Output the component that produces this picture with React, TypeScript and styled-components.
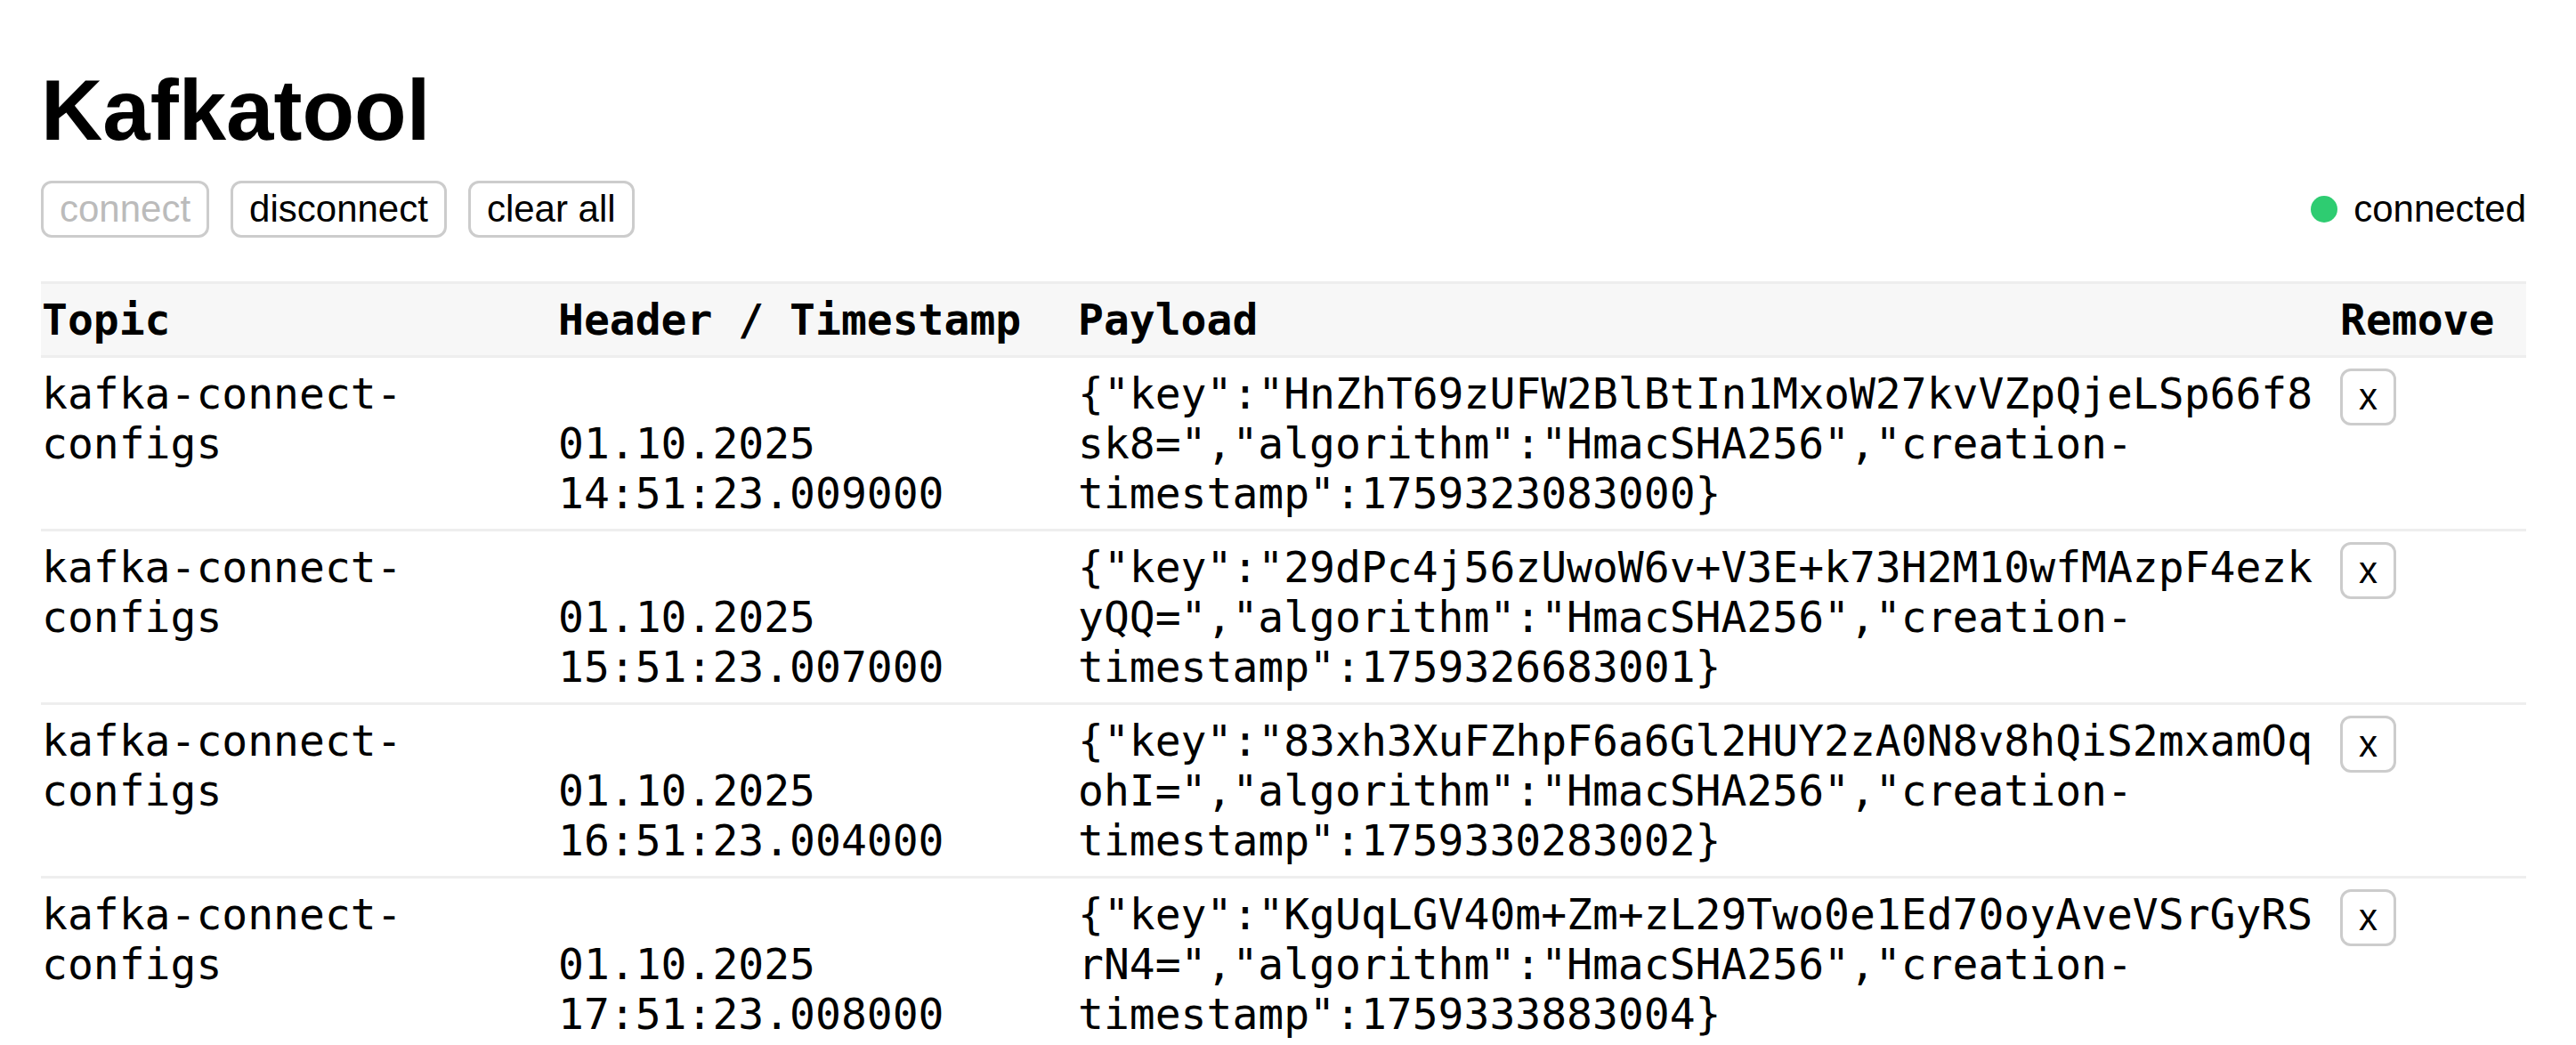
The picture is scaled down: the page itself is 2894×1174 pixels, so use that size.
import React from "react";
import styled, { createGlobalStyle } from "styled-components";

const GlobalStyle = createGlobalStyle`
  html { scrollbar-width: none; }
  body {
    margin: 0;
    background: #ffffff;
    color: #000000;
    font-family: "Liberation Sans", Arial, sans-serif;
  }
`;

const Page = styled.main`
  padding: 69px 56px 0 46px;
`;

const Title = styled.h1`
  margin: 0 0 24px;
  font-family: "Liberation Sans", Arial, sans-serif;
  font-weight: 700;
  font-size: 96px;
  line-height: 110px;
`;

const Toolbar = styled.div`
  display: flex;
  align-items: center;
  justify-content: space-between;
`;

const ButtonGroup = styled.div`
  display: flex;
  gap: 24px;
`;

const Button = styled.button`
  font-family: "Liberation Sans", Arial, sans-serif;
  font-size: 42px;
  line-height: 46px;
  padding: 6px 18px;
  border: 3px solid #cccccc;
  border-radius: 12px;
  background: #ffffff;
  color: #000000;
  cursor: pointer;

  &:disabled {
    color: #bbbbbb;
    cursor: default;
  }
`;

const Status = styled.div`
  display: flex;
  align-items: center;
  gap: 18px;
  font-size: 42px;
  line-height: 46px;
`;

const Dot = styled.span<{ $on: boolean }>`
  width: 30px;
  height: 30px;
  border-radius: 50%;
  background: ${(p) => (p.$on ? "#2ecc71" : "#e74c3c")};
`;

const Table = styled.table`
  margin-top: 49px;
  width: 100%;
  table-layout: fixed;
  border-collapse: separate;
  border-spacing: 0;
  font-family: "DejaVu Sans Mono", Menlo, monospace;
  font-size: 48px;
`;

const Col = styled.col<{ $w: number }>`
  width: ${(p) => p.$w}px;
`;

const Th = styled.th`
  text-align: left;
  font-weight: 700;
  padding: 12px 21px 12px 1px;
  background: #f7f7f7;
  border-top: 3px solid #eeeeee;
  border-bottom: 3px solid #eeeeee;
`;

const Td = styled.td`
  vertical-align: top;
  padding: 12px 21px 12px 1px;
  border-bottom: 3px solid #eeeeee;
  overflow-wrap: anywhere;
`;

const HeaderLine = styled.div`
  min-height: 1lh;
`;

const RemoveButton = styled(Button)``;

type Message = {
  topic: string;
  header: string;
  timestamp: string;
  payload: string;
};

const messages: Message[] = [
  {
    topic: "kafka-connect-configs",
    header: "",
    timestamp: "01.10.2025 14:51:23.009000",
    payload:
      '{"key":"HnZhT69zUFW2BlBtIn1MxoW27kvVZpQjeLSp66f8sk8=","algorithm":"HmacSHA256","creation-timestamp":1759323083000}',
  },
  {
    topic: "kafka-connect-configs",
    header: "",
    timestamp: "01.10.2025 15:51:23.007000",
    payload:
      '{"key":"29dPc4j56zUwoW6v+V3E+k73H2M10wfMAzpF4ezkyQQ=","algorithm":"HmacSHA256","creation-timestamp":1759326683001}',
  },
  {
    topic: "kafka-connect-configs",
    header: "",
    timestamp: "01.10.2025 16:51:23.004000",
    payload:
      '{"key":"83xh3XuFZhpF6a6Gl2HUY2zA0N8v8hQiS2mxamOqohI=","algorithm":"HmacSHA256","creation-timestamp":1759330283002}',
  },
  {
    topic: "kafka-connect-configs",
    header: "",
    timestamp: "01.10.2025 17:51:23.008000",
    payload:
      '{"key":"KgUqLGV40m+Zm+zL29Two0e1Ed70oyAveVSrGyRSrN4=","algorithm":"HmacSHA256","creation-timestamp":1759333883004}',
  },
];

export default function App() {
  return (
    <>
      <GlobalStyle />
      <Page>
        <Title>Kafkatool</Title>
        <Toolbar>
          <ButtonGroup>
            <Button disabled>connect</Button>
            <Button>disconnect</Button>
            <Button>clear all</Button>
          </ButtonGroup>
          <Status>
            <Dot $on />
            <span>connected</span>
          </Status>
        </Toolbar>
        <Table>
          <colgroup>
            <Col $w={580} />
            <Col $w={584} />
            <Col $w={1418} />
            <Col $w={210} />
          </colgroup>
          <thead>
            <tr>
              <Th>Topic</Th>
              <Th>Header / Timestamp</Th>
              <Th>Payload</Th>
              <Th>Remove</Th>
            </tr>
          </thead>
          <tbody>
            {messages.map((m, i) => (
              <tr key={i}>
                <Td>{m.topic}</Td>
                <Td>
                  <HeaderLine>{m.header}</HeaderLine>
                  <div>{m.timestamp}</div>
                </Td>
                <Td>{m.payload}</Td>
                <Td>
                  <RemoveButton>x</RemoveButton>
                </Td>
              </tr>
            ))}
          </tbody>
        </Table>
      </Page>
    </>
  );
}
